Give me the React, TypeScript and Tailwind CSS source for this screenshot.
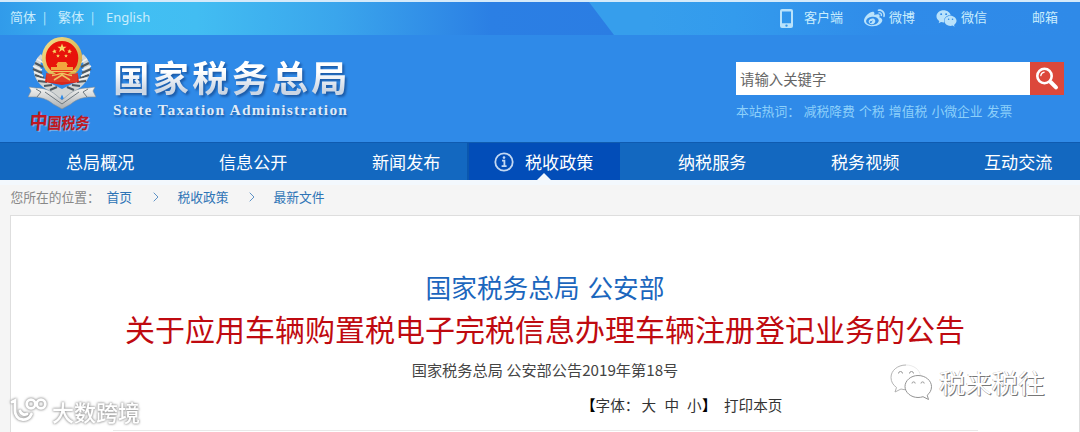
import React from 'react';
import { FaWeibo, FaWeixin } from 'react-icons/fa';

const navItems = ['总局概况', '信息公开', '新闻发布', '税收政策', '纳税服务', '税务视频', '互动交流'];
const activeItem = '税收政策';
const hotWords = ['减税降费', '个税', '增值税', '小微企业', '发票'];

const PhoneIcon = () => (
  <svg width="13" height="19" viewBox="0 0 13 19" fill="currentColor">
    <path
      fillRule="evenodd"
      d="M2 0h9a2 2 0 0 1 2 2v15a2 2 0 0 1-2 2H2a2 2 0 0 1-2-2V2a2 2 0 0 1 2-2zm0 2.6v11.6h9V2.6zM6.5 15.4a1.2 1.2 0 1 0 0 2.4 1.2 1.2 0 0 0 0-2.4z"
    />
  </svg>
);

const SearchIcon = () => (
  <svg width="24" height="24" viewBox="0 0 24 24" fill="none" stroke="#fff" strokeLinecap="round">
    <circle cx="9.5" cy="9" r="7.2" strokeWidth="2.6" />
    <path d="M5.8 8.6a4 4 0 0 1 3.4-3.4" strokeWidth="1.3" />
    <path d="M15.6 15l5.4 5.4" strokeWidth="4" />
  </svg>
);

const InfoIcon = () => (
  <svg width="20" height="20" viewBox="0 0 20 20" fill="none" stroke="#c3d8f2">
    <circle cx="10" cy="10" r="8.7" strokeWidth="1.8" />
    <path d="M8 8.6h2.4v5.4M7.6 14.2h5" strokeWidth="1.8" />
    <circle cx="10" cy="5.6" r="1.3" fill="#c3d8f2" stroke="none" />
  </svg>
);

const Chevron = () => (
  <svg width="6" height="10" viewBox="0 0 6 10" fill="none" stroke="#5f93c6">
    <path d="M.7.7L5 5 .7 9.3" />
  </svg>
);

const Emblem = () => (
  <svg width="68" height="74" viewBox="0 0 68 74">
    <defs>
      <linearGradient id="silver" x1="0" y1="0" x2="0" y2="1">
        <stop offset="0" stopColor="#f6f6f4" />
        <stop offset="1" stopColor="#a9adb0" />
      </linearGradient>
      <linearGradient id="gold" x1="0" y1="0" x2="1" y2="1">
        <stop offset="0" stopColor="#f3df8a" />
        <stop offset="1" stopColor="#cda23c" />
      </linearGradient>
    </defs>
    {/* wheat ears */}
    <path d="M13 17C3 26 3 40 15 50l17 12 4-9-18-9C11 37 11 27 15 20z" fill="#d2d5d4" />
    <path d="M55 17c10 9 10 23-2 33L36 62l-4-9 18-9c7-7 7-17 3-24z" fill="#d2d5d4" />
    <path
      d="M7 26l8 4M5 32l9 4M7 38l9 3M10 44l9 1M16 49l8-1M22 53l7-3M61 26l-8 4M63 32l-9 4M61 38l-9 3M58 44l-9 1M52 49l-8-1M46 53l-7-3"
      stroke="#4d5860"
      strokeWidth="2.2"
    />
    <path
      d="M9 22l7 4M5 29l9 4M6 35l9 4M9 41l9 2M59 22l-7 4M63 29l-9 4M62 35l-9 4M59 41l-9 2"
      stroke="#f0f0ee"
      strokeWidth="1.6"
    />
    {/* ribbon */}
    <path
      d="M1 50l7 1c8 0 14 2 20 7l6 5 6-5c6-5 12-7 20-7l7-1-2 4 3 6-8 0c-8 1-12 3-17 7l-9 5-9-5c-5-4-9-6-17-7l-8 0 3-6z"
      fill="url(#silver)"
      stroke="#7e8b96"
      strokeWidth=".6"
    />
    <path d="M8 52l5 3-4 5M60 52l-5 3 4 5M17 55l17 12 17-12" fill="none" stroke="#6f797f" strokeWidth="1" />
    {/* national emblem */}
    <path d="M18 38h32l1 7-17 3-17-3z" fill="#d8281c" />
    <ellipse cx="34" cy="21" rx="18.2" ry="19" fill="#e8130b" stroke="url(#gold)" strokeWidth="3.8" />
    <path d="M18 36c9 2 23 2 32 0l-1 9H19z" fill="#e03a26" />
    <path
      d="M34 6.500l1.200 3.300h3.400l-2.700 2 1 3.300-2.900-2-2.900 2 1-3.300-2.700-2h3.400zM26 12l1 1.400 1.600-.2-1 1.400.7 1.500-1.600-.5-1.200 1.100v-1.700l-1.500-.8 1.600-.5zM42 12l.4 1.700 1.600.5-1.500.8v1.700l-1.200-1.100-1.600.5.7-1.500-1-1.400 1.600.2zM30 17l.5 1.300h1.300l-1 .9.4 1.400-1.200-.9-1.200.9.4-1.400-1-.9h1.300zM38 17l.5 1.300h1.300l-1 .9.4 1.400-1.200-.9-1.200.9.4-1.400-1-.9h1.300z"
      fill="#f8d865"
    />
    <path d="M30 25h8l2 3h-1v2h6v3H23v-3h6v-2h-1z" fill="#f2a53d" />
    <path d="M20 34.500h28M24 38.500c5 0 6-2 10-2s5 2 10 2M26 43l8-5 8 5" stroke="#eec560" strokeWidth="1.500" fill="none" />
  </svg>
);

const TopBar = () => (
  <div className="h-[35px] border-t-2 border-[#d5eafa] bg-[linear-gradient(90deg,#369eec_60%,#339bed_68%,#2f8be9_82%,#2f8ae8_100%)]">
    <div className="flex h-[33px] items-center text-[13px] leading-[29px] text-[#c9edfd]">
      <div className="flex h-full w-[614px] shrink-0 items-center bg-[linear-gradient(90deg,#319bea_0%,#41bff3_22%,#42bdf2_32%,#3aa5ec_55%,#2b7fe4_80%,#2b7de3_100%)] pb-[4px] pl-[10px] [clip-path:polygon(0_0,589px_0,614px_100%,0_100%)]">
        <span className="w-[33px]">简体</span>
        <span className="w-[15px] text-xs">|</span>
        <span className="w-[33px]">繁体</span>
        <span className="w-[15px] text-xs">|</span>
        <span className="pt-px font-['Noto_Sans'] text-[13px]">English</span>
      </div>
      <div className="flex items-center pb-[4px] pl-[166px]">
        <span className="w-[24px] pt-[3px] text-[#b9e2fb]"><PhoneIcon /></span>
        <span className="w-[60px]">客户端</span>
        <FaWeibo className="mr-[4px] mt-[3px] size-[21px] text-[#b9e2fb]" />
        <span className="w-[47px]">微博</span>
        <FaWeixin className="mr-[4px] mt-[3px] size-[21px] text-[#b9e2fb]" />
        <span className="w-[71px]">微信</span>
        <span>邮箱</span>
      </div>
    </div>
  </div>
);

const Header = () => (
  <header className="flex h-[107px] items-start bg-[#2f8ae8]">
    <div className="flex w-[113px] shrink-0 flex-col items-start pl-[28px] pt-[2px]">
      <Emblem />
      <span className="-mt-[3px] ml-[3px] origin-top -skew-x-6 scale-y-[1.15] whitespace-nowrap font-['Noto_Sans_CJK_SC'] text-[14px] font-bold leading-[20px] text-[#c01822] [text-shadow:1px_1px_0_#7fb2e6]">
        <span className="text-[18px]">中</span>国税务
      </span>
    </div>
    <div className="pt-[18px]">
      <h1 className="whitespace-nowrap bg-[linear-gradient(180deg,#fff_40%,#cbd6e4_80%)] bg-clip-text text-[36.5px] font-bold leading-[47px] tracking-[3.1px] text-transparent [filter:drop-shadow(2px_2px_1px_#1c5ba8)]">
        国家税务总局
      </h1>
      <p className="mt-px whitespace-nowrap font-['Liberation_Serif'] text-[15.5px] font-bold leading-[18px] tracking-[1.22px] text-[#dfeaf7] [text-shadow:1px_2px_2px_#1c5ba8]">
        State Taxation Administration
      </p>
    </div>
    <div className="ml-auto mr-[16px] w-[328px] pt-[27px]">
      <div className="flex h-[33px]">
        <div className="w-[294px] bg-white pl-[4px] text-[14.4px] leading-[34px] text-[#666]">请输入关键字</div>
        <button type="button" aria-label="搜索" className="flex w-[34px] items-center justify-center bg-[#dc483b]">
          <SearchIcon />
        </button>
      </div>
      <div className="mt-[5px] flex gap-[4.2px] whitespace-nowrap text-[12.8px] leading-[21px] text-[#8dd0fa]">
        <span className="w-[63.5px]">本站热词：</span>
        {hotWords.map(word => (
          <span key={word}>{word}</span>
        ))}
      </div>
    </div>
  </header>
);

const NavBar = () => (
  <nav className="flex h-[38px] border-t border-[#0f5bb0] bg-[#1368c0] pl-[8px] text-[17.1px] leading-[38px] text-white">
    {navItems.map(item => {
      const isActive = item === activeItem;
      return (
        <div
          key={item}
          className={`relative flex w-[153px] shrink-0 items-center ${
            isActive ? 'border-l-2 border-[#0b57ae] bg-[#024db8] pl-[25px]' : 'pl-[26px]'
          }`}
        >
          <span className="w-[32px] shrink-0">{isActive && <InfoIcon />}</span>
          <span className={`whitespace-nowrap ${isActive ? '-ml-px' : ''}`}>{item}</span>
          {isActive && (
            <span className="absolute bottom-0 left-[68px] h-[7px] w-[14px] bg-[#f3f8fc] [clip-path:polygon(50%_0,100%_100%,0_100%)]" />
          )}
        </div>
      );
    })}
  </nav>
);

const Breadcrumb = () => (
  <div className="flex h-[35px] items-center border-t-[5px] border-[#f3f8fd] pb-[7px] pl-[10.5px] text-[12.75px] leading-[23px] text-[#2e74b5]">
    <span className="w-[96px] text-[#888]">您所在的位置：</span>
    <span className="w-[46px]">首页</span>
    <span className="w-[25px]"><Chevron /></span>
    <span className="w-[71px]">税收政策</span>
    <span className="w-[25px]"><Chevron /></span>
    <span>最新文件</span>
  </div>
);

const Article = () => (
  <main className="ml-[10px] flex h-[217px] flex-col items-center border border-b-0 border-[#dedede] bg-white pt-[50px]">
    <h2 className="text-[25.7px] leading-[41px] text-[#1b66bd] [word-spacing:2px]">国家税务总局 公安部</h2>
    <h1 className="whitespace-nowrap text-[30px] leading-[42px] text-[#bf0a10]">
      关于应用车辆购置税电子完税信息办理车辆注册登记业务的公告
    </h1>
    <p className="text-[15.2px] leading-[40px] text-[#444]">国家税务总局 公安部公告2019年第18号</p>
    <div className="flex w-full whitespace-nowrap pl-[570px] text-[14.6px] leading-[31px] text-[#333]">
      <span className="w-[60.5px]"><b className="text-black">【</b>字体：</span>
      <span className="w-[23px]">大</span>
      <span className="w-[22.5px]">中</span>
      <span className="w-[15px]">小</span>
      <b className="w-[22px] text-black">】</b>
      <span>打印本页</span>
    </div>
    <div className="mt-[10px] h-px w-[865px] shrink-0 bg-[#e9e9e9]" />
  </main>
);

const ChatMark = () => (
  <div className="absolute left-[889px] top-[362px] flex items-center">
    <svg width="45" height="40" viewBox="0 0 45 40" fill="#fff" strokeLinejoin="round">
      <path d="M17 3C8.500 3 2 8.500 2 15.500c0 4 2 7.500 5.500 10L6 30l6-3c2 .6 4 .8 6 .7" stroke="#aaa" strokeWidth=".9" />
      <path d="M17 3c8 0 14 5 14.500 11" stroke="#e4e4e4" strokeWidth=".8" />
      <path d="M29 13.500c-7 0-13 5-13 11s6 11 13 11c1.800 0 3.500-.3 5-.8l5.500 2.800-1.300-4.300c2.600-2 4.300-5 4.300-8.500 0-6.200-6-11.200-13.500-11.200z" stroke="#949494" strokeWidth="1" />
      <path d="M9.500 11.500a2 2 0 0 1 4 0M20.500 11.500a2 2 0 0 1 4 0M23 21.500a1.600 1.600 0 0 1 3.200 0M32 21.500a1.600 1.600 0 0 1 3.200 0" fill="none" stroke="#999" />
    </svg>
    <span className="ml-[5px] whitespace-nowrap text-[26.4px] leading-[40px] text-white [text-shadow:1px_1px_0_#777,-0.5px_-0.5px_0_#bbb]">
      税来税往
    </span>
  </div>
);

const SiteMark = () => (
  <div className="absolute left-[9px] top-[395px] flex items-center [filter:drop-shadow(0_0_1px_#999)_drop-shadow(0_0_1px_#bbb)]">
    <svg width="40" height="30" viewBox="0 0 40 30" fill="none" stroke="#fff" strokeWidth="2.800" strokeLinecap="round">
      <path d="M3 6l3-1.500V15a8.500 8.500 0 0 0 16.500 3" />
      <path d="M11 15a5 5 0 0 0 7 3" />
      <circle cx="22" cy="8" r="4.300" />
      <circle cx="32" cy="8" r="4.300" />
    </svg>
    <span className="ml-[3px] whitespace-nowrap text-[22px] font-medium leading-[32px] text-white">大数跨境</span>
  </div>
);

export default function App() {
  return (
    <div className="relative h-[432px] w-[1080px] overflow-hidden bg-[#f5f5f5] font-['Noto_Sans_CJK_SC',sans-serif]">
      <TopBar />
      <Header />
      <NavBar />
      <Breadcrumb />
      <Article />
      <ChatMark />
      <SiteMark />
    </div>
  );
}
